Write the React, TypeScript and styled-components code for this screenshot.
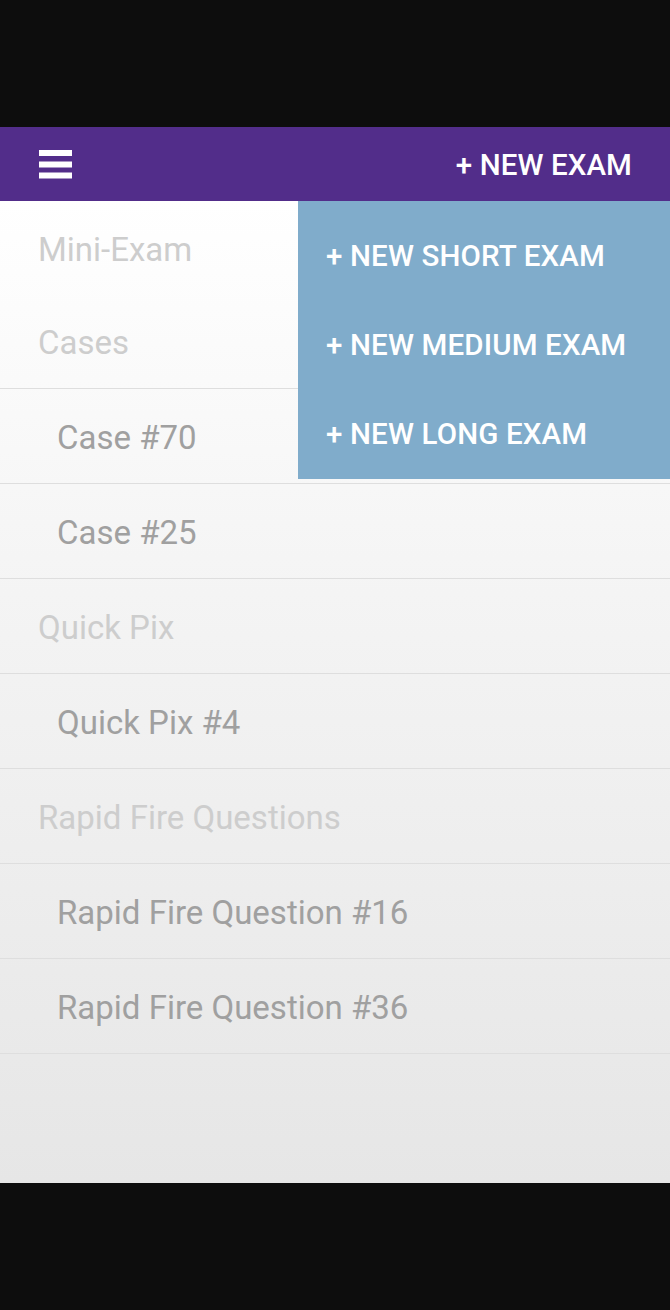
import React from 'react'
import styled, { createGlobalStyle } from 'styled-components'

const GlobalStyle = createGlobalStyle`
    html, body {
        margin: 0;
        padding: 0;
        background: #0d0d0d;
    }
    body {
        font-family: Roboto, "Noto Sans", "Liberation Sans", sans-serif;
    }
`

type Row = {
    label : string,
    kind : 'section' | 'item',
    divider : boolean
}

const rows: Row[] = [
    { label: 'Mini-Exam', kind: 'section', divider: false },
    { label: 'Cases', kind: 'section', divider: true },
    { label: 'Case #70', kind: 'item', divider: true },
    { label: 'Case #25', kind: 'item', divider: true },
    { label: 'Quick Pix', kind: 'section', divider: true },
    { label: 'Quick Pix #4', kind: 'item', divider: true },
    { label: 'Rapid Fire Questions', kind: 'section', divider: true },
    { label: 'Rapid Fire Question #16', kind: 'item', divider: true },
    { label: 'Rapid Fire Question #36', kind: 'item', divider: true },
]

const examOptions = ['+ NEW SHORT EXAM', '+ NEW MEDIUM EXAM', '+ NEW LONG EXAM']

function MenuIcon() {
    return (
        <svg width="33" height="29" viewBox="0 0 33 29">
            <rect x="0" y="0" width="33" height="6" fill="#fff" />
            <rect x="0" y="11.5" width="33" height="6" fill="#fff" />
            <rect x="0" y="22.5" width="33" height="6" fill="#fff" />
        </svg>
    )
}

export default function App() {
    return (
        <Page>
            <GlobalStyle />
            <Screen>
                <TopBar>
                    <MenuButton>
                        <MenuIcon />
                    </MenuButton>
                    <NewExamButton>+ NEW EXAM</NewExamButton>
                </TopBar>
                <Content>
                    <List>
                        {rows.map((row, i) => (
                            <ListRow key={i} $kind={row.kind} $divider={row.divider} $first={i === 0}>
                                {row.label}
                            </ListRow>
                        ))}
                    </List>
                    <Dropdown>
                        {examOptions.map((opt) => (
                            <DropdownItem key={opt}>{opt}</DropdownItem>
                        ))}
                    </Dropdown>
                </Content>
            </Screen>
        </Page>
    )
}

const Page = styled.div`
    width: 670px;
    min-height: 1310px;
    padding: 127px 0;
    box-sizing: border-box;
    background: #0d0d0d;
`

const Screen = styled.div`
    display: flex;
    flex-direction: column;
    height: 1056px;
`

const TopBar = styled.header`
    height: 74px;
    background: #522d8a;
    display: flex;
    align-items: center;
    justify-content: space-between;
    padding: 0 38px 0 39px;
`

const MenuButton = styled.div`
    display: flex;
    align-items: center;
    height: 29px;
    margin-top: 1px;

    svg {
        display: block;
    }
`

const NewExamButton = styled.span`
    color: #fff;
    font-weight: 500;
    font-size: 29.5px;
    letter-spacing: 0.1px;
    margin-top: 2px;
`

const Content = styled.div`
    position: relative;
    flex: 1;
    background: linear-gradient(180deg, #ffffff 0%, #f4f4f4 40%, #e6e6e6 100%);
`

const List = styled.div`
    display: flex;
    flex-direction: column;
`

const ListRow = styled.div<{ $kind: 'section' | 'item', $divider: boolean, $first: boolean }>`
    height: ${p => p.$first ? '90px' : '91px'};
    padding-top: 3px;
    display: flex;
    align-items: center;
    padding-left: ${p => p.$kind === 'section' ? '38px' : '57px'};
    font-size: 33px;
    color: ${p => p.$kind === 'section' ? '#cdcdcd' : '#a0a0a0'};
    border-bottom: ${p => p.$divider ? '1px solid #dedede' : 'none'};
`

const Dropdown = styled.div`
    position: absolute;
    top: 0;
    right: 0;
    width: 372px;
    height: 278px;
    box-sizing: border-box;
    padding-top: 10px;
    background: #80accb;
    display: flex;
    flex-direction: column;
`

const DropdownItem = styled.div`
    height: 89px;
    display: flex;
    align-items: center;
    padding-left: 28px;
    color: #fff;
    font-weight: 500;
    font-size: 29.5px;
    letter-spacing: 0.15px;
`
